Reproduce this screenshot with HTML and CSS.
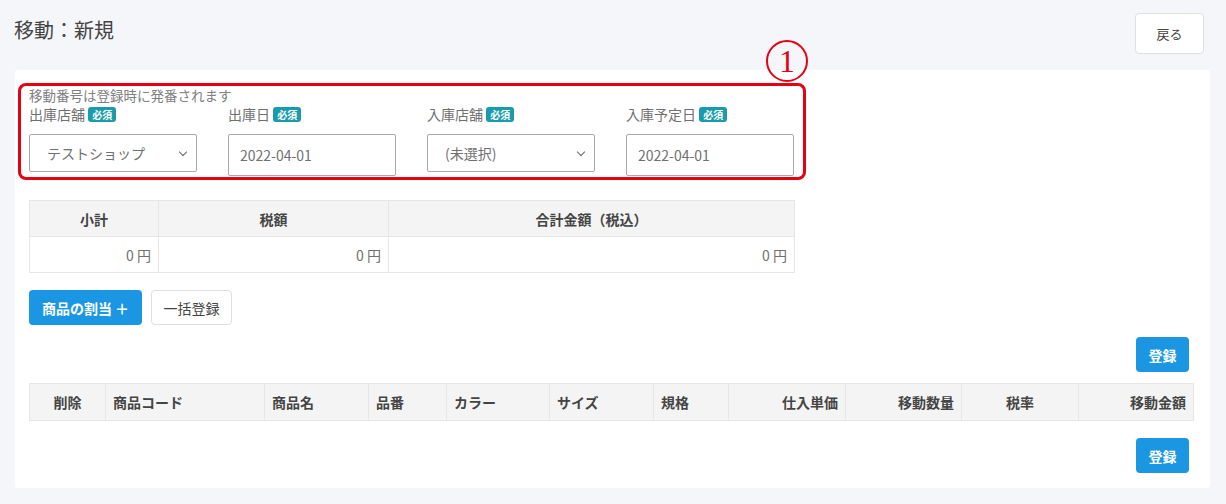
FILE: index.html
```html
<!DOCTYPE html>
<html lang="ja">
<head>
    <meta charset="UTF-8">
    <meta name="viewport" content="width=device-width, initial-scale=1.0">
    <title>移動：新規</title>
    <link rel="stylesheet" href="styles.css">
</head>
<body>
    <div class="page-header">
        <h1 class="page-title">移動：新規</h1>
        <button class="btn btn-light btn-back">戻る</button>
    </div>

    <div class="card">
        <!-- 基本情報 -->
        <div class="form-area">
            <span class="mark">1</span>
            <p class="note">移動番号は登録時に発番されます</p>
            <div class="form-grid">
                <div class="field">
                    <label>出庫店舗 <span class="badge">必須</span></label>
                    <div class="select">テストショップ</div>
                </div>
                <div class="field">
                    <label>出庫日 <span class="badge">必須</span></label>
                    <div class="input">2022-04-01</div>
                </div>
                <div class="field">
                    <label>入庫店舗 <span class="badge">必須</span></label>
                    <div class="select">(未選択)</div>
                </div>
                <div class="field">
                    <label>入庫予定日 <span class="badge">必須</span></label>
                    <div class="input">2022-04-01</div>
                </div>
            </div>
        </div>

        <!-- 金額 -->
        <table class="table summary">
            <thead>
                <tr>
                    <th style="width:129px">小計</th>
                    <th style="width:230px">税額</th>
                    <th>合計金額（税込）</th>
                </tr>
            </thead>
            <tbody>
                <tr>
                    <td class="num">0 円</td>
                    <td class="num">0 円</td>
                    <td class="num">0 円</td>
                </tr>
            </tbody>
        </table>

        <div class="btn-row">
            <button class="btn btn-primary">商品の割当 ＋</button>
            <button class="btn btn-light">一括登録</button>
        </div>

        <div class="submit-row">
            <button class="btn btn-primary">登録</button>
        </div>

        <!-- 商品一覧 -->
        <table class="table items">
            <thead>
                <tr>
                    <th class="center" style="width:76px">削除</th>
                    <th style="width:159px">商品コード</th>
                    <th style="width:104px">商品名</th>
                    <th style="width:78px">品番</th>
                    <th style="width:103px">カラー</th>
                    <th style="width:104px">サイズ</th>
                    <th style="width:75px">規格</th>
                    <th class="right" style="width:117px">仕入単価</th>
                    <th class="right" style="width:116px">移動数量</th>
                    <th class="center" style="width:117px">税率</th>
                    <th class="right">移動金額</th>
                </tr>
            </thead>
        </table>

        <div class="submit-row submit-bottom">
            <button class="btn btn-primary">登録</button>
        </div>
    </div>
</body>
</html>
```

FILE: styles.css
```css
/* 移動 新規画面 */
* {
    box-sizing: border-box;
}
body {
    margin: 0;
    background-color: #f4f6f9;
    font-family: "Noto Sans CJK JP", "Noto Sans", sans-serif;
    color: #444;
    font-size: 14px;
}
.page-header {
    display: flex;
    justify-content: space-between;
    align-items: flex-start;
    padding: 13px 22px 0 14px;
    height: 70px;
}
.page-title {
    margin: 2px 0 0;
    font-size: 20px;
    font-weight: normal;
    color: #444;
    line-height: 30px;
}
.btn {
    font-family: inherit;
    font-size: 14px;
    height: 35px;
    padding: 0;
    border-radius: 4px;
    cursor: pointer;
    line-height: 1;
    white-space: nowrap;
}
.btn-light {
    background-color: #fff;
    border: 1px solid #dcdfe3;
    color: #444;
}
.btn-back {
    width: 69px;
    height: 41px;
    font-size: 13px;
}
.btn-primary {
    background-color: #1b96e2;
    border: none;
    color: #fff;
    font-weight: bold;
}
.card {
    background-color: #fff;
    margin: 0 16px 0 15px;
    padding: 13px 16px 15px 14px;
    border-radius: 3px;
}
.form-area {
    position: relative;
    width: 788px;
    margin-left: -11px;
    border: 3px solid #e50012;
    border-radius: 8px;
    padding: 0 8px 1px 8px;
}
.mark {
    position: absolute;
    top: -46px;
    left: 745px;
    width: 42px;
    height: 42px;
    border: 2px solid #e50012;
    border-radius: 50%;
    color: #e50012;
    font-family: "Liberation Serif", serif;
    font-size: 32px;
    line-height: 38px;
    text-align: center;
}
.note {
    margin: 0;
    font-size: 13.5px;
    line-height: 18px;
    color: #808080;
}
.form-grid {
    display: grid;
    grid-template-columns: repeat(4, 168px);
    column-gap: 31px;
}
.field label {
    display: block;
    font-size: 14px;
    color: #707070;
    line-height: 20px;
    margin-bottom: 10px;
}
.badge {
    display: inline-block;
    background-color: #1a9bab;
    color: #fff;
    font-size: 10px;
    font-weight: bold;
    line-height: 15px;
    padding: 0 4px;
    border-radius: 3px;
    vertical-align: 1px;
}
.select, .input {
    border: 1px solid #a9a9a9;
    border-radius: 2px;
    color: #707070;
    font-size: 14px;
    display: flex;
    align-items: center;
}
.select {
    height: 38px;
    padding-left: 17px;
    position: relative;
}
.select::after {
    content: "";
    position: absolute;
    right: 10px;
    top: 14px;
    width: 5px;
    height: 5px;
    border-right: 1.5px solid #666;
    border-bottom: 1.5px solid #666;
    transform: rotate(45deg);
}
.input {
    height: 42px;
    padding-left: 11px;
}
.table {
    border-collapse: collapse;
    table-layout: fixed;
}
.table th, .table td {
    border: 1px solid #e6e6e6;
    padding: 0 7px;
    height: 36px;
    font-size: 14px;
}
.table th {
    background-color: #f4f4f4;
    font-weight: bold;
    color: #444;
    text-align: left;
}
.summary {
    width: 766px;
    margin-top: 20px;
}
.summary th {
    text-align: center;
}
.summary td {
    color: #707070;
}
.num, .right {
    text-align: right !important;
}
.center {
    text-align: center !important;
}
.btn-row {
    display: flex;
    gap: 9px;
    margin-top: 17px;
}
.btn-row .btn-primary {
    width: 113px;
}
.btn-row .btn-light {
    width: 81px;
}
.submit-row {
    display: flex;
    justify-content: flex-end;
    padding-right: 5px;
    margin-top: 12px;
}
.submit-row .btn {
    width: 53px;
}
.items {
    width: 1165px;
    margin-top: 11px;
}
.items th {
    height: 37px;
}
.submit-bottom {
    margin-top: 17px;
}
```
